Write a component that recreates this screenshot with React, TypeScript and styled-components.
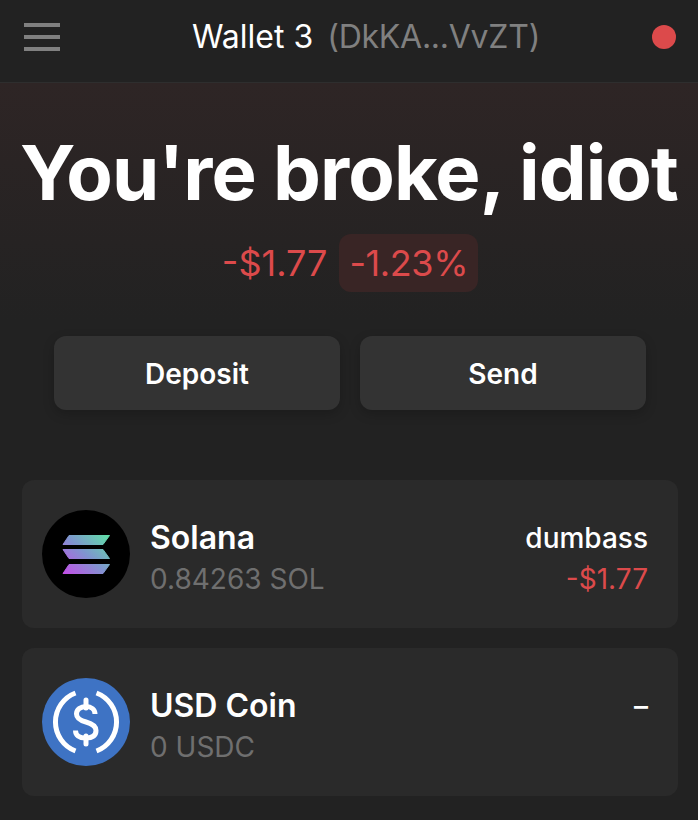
import React from "react";
import styled, { createGlobalStyle } from "styled-components";

const GlobalStyle = createGlobalStyle`
  html, body {
    margin: 0;
    padding: 0;
    background: #222222;
    font-family: Inter, "Noto Sans", sans-serif;
    color: #fff;
  }
`;

const Page = styled.div`
  width: 698px;
  height: 820px;
  overflow: hidden;
  background: #222222;
`;

const Header = styled.header`
  height: 82px;
  padding: 0 22px 0 24px;
  display: flex;
  align-items: center;
  justify-content: space-between;
  border-bottom: 1px solid #2e2e2e;
`;

const MenuIcon = styled.div`
  width: 36px;
  display: flex;
  flex-direction: column;
  gap: 8px;
  margin-bottom: 8px;

  span {
    height: 4px;
    background: #808080;
  }
`;

const WalletTitle = styled.div`
  display: flex;
  gap: 14px;
  margin-left: 20px;
  margin-bottom: 8px;
  font-size: 32px;
  line-height: 36px;
`;

const WalletName = styled.span`
  color: #fff;
`;

const WalletAddress = styled.span`
  color: #808080;
  letter-spacing: -0.25px;
`;

const StatusDot = styled.div`
  width: 24px;
  height: 24px;
  border-radius: 50%;
  background: #dc4a4b;
  margin-bottom: 8px;
`;

const Hero = styled.section`
  height: 397px;
  box-sizing: border-box;
  padding-top: 43px;
  display: flex;
  flex-direction: column;
  align-items: center;
  background: linear-gradient(180deg, #2e2525 0%, #222222 60%);
`;

const Balance = styled.h1`
  margin: 0;
  font-size: 76px;
  line-height: 92px;
  font-weight: 650;
  letter-spacing: -0.9px;
  white-space: nowrap;
`;

const ChangeRow = styled.div`
  margin-top: 16px;
  padding-left: 2px;
  display: flex;
  align-items: center;
  gap: 12px;
  font-size: 36px;
  line-height: 58px;
  color: #dc4a4b;
`;

const ChangeBadge = styled.span`
  padding: 0 10px;
  border-radius: 12px;
  background: #392525;
  letter-spacing: -0.4px;
`;

const Actions = styled.div`
  margin-top: 44px;
  padding-left: 2px;
  display: flex;
  gap: 20px;
`;

const ActionButton = styled.button`
  width: 286px;
  height: 74px;
  padding: 2px 0 0;
  border: none;
  border-radius: 12px;
  background: #333333;
  color: #fff;
  font-family: inherit;
  font-size: 28px;
  font-weight: 600;
  box-shadow: 0 4px 12px rgba(0, 0, 0, 0.2);
`;

const TokenList = styled.div`
  padding: 0 20px 0 22px;
  display: flex;
  flex-direction: column;
  gap: 20px;
`;

const TokenCard = styled.div`
  height: 148px;
  box-sizing: border-box;
  padding: 0 30px 0 20px;
  display: flex;
  align-items: center;
  gap: 20px;
  border-radius: 12px;
  background: #2a2a2a;
`;

const TokenIcon = styled.svg`
  width: 88px;
  height: 88px;
  flex-shrink: 0;
`;

const TokenInfo = styled.div`
  flex: 1;
  margin-top: 8px;
  display: flex;
  flex-direction: column;
  gap: 3px;
`;

const TokenName = styled.div`
  font-size: 32px;
  line-height: 38px;
  font-weight: 600;
`;

const TokenAmount = styled.div`
  font-size: 28px;
  line-height: 38px;
  color: #6f6f6f;
`;

const TokenValue = styled.div`
  margin-top: 8px;
  display: flex;
  flex-direction: column;
  align-items: flex-end;
  gap: 3px;
`;

const ValueLabel = styled.div`
  font-size: 28px;
  line-height: 38px;
  font-weight: 500;
`;

const ValueChange = styled.div`
  font-size: 28px;
  line-height: 38px;
  color: #dc4a4b;
`;

const SolanaIcon = () => (
  <TokenIcon viewBox="0 0 88 88">
    <defs>
      <linearGradient id="sol" x1="24" y1="66" x2="64" y2="22" gradientUnits="userSpaceOnUse">
        <stop offset="0" stopColor="#c44ee8" />
        <stop offset="0.5" stopColor="#7f95cf" />
        <stop offset="1" stopColor="#5fe2a6" />
      </linearGradient>
    </defs>
    <circle cx="44" cy="44" r="44" fill="#000" />
    <g fill="url(#sol)" stroke="url(#sol)" strokeWidth="1" strokeLinejoin="round">
      <path d="M27 25.500H67.500L61 34.500H21z" />
      <path d="M21 39.500H61L67.500 48.500H27z" />
      <path d="M27 54.500H67.500L61 63.500H21z" />
    </g>
  </TokenIcon>
);

const UsdcIcon = () => (
  <TokenIcon viewBox="0 0 88 88">
    <circle cx="44" cy="44" r="44" fill="#3e73c4" />
    <g fill="none" stroke="#fff" strokeWidth="5">
      <path d="M33.500 15a31 31 0 0 0 0 58" />
      <path d="M54.500 15a31 31 0 0 1 0 58" />
      <path d="M53 36c0-4.500-3.700-7.500-9-7.500s-9.500 3-9.500 7.500 4 6.500 9.500 8 10 3.500 10 8.500-4 7.500-10.500 7.500-10-3-10-7.500" />
      <path d="M44 22v8M44 58v8" strokeLinecap="round" />
    </g>
  </TokenIcon>
);

export default function App() {
  return (
    <Page>
      <GlobalStyle />
      <Header>
        <MenuIcon>
          <span />
          <span />
          <span />
        </MenuIcon>
        <WalletTitle>
          <WalletName>Wallet 3</WalletName>
          <WalletAddress>(DkKA...VvZT)</WalletAddress>
        </WalletTitle>
        <StatusDot />
      </Header>
      <Hero>
        <Balance>You're broke, idiot</Balance>
        <ChangeRow>
          <span>-$1.77</span>
          <ChangeBadge>-1.23%</ChangeBadge>
        </ChangeRow>
        <Actions>
          <ActionButton>Deposit</ActionButton>
          <ActionButton>Send</ActionButton>
        </Actions>
      </Hero>
      <TokenList>
        <TokenCard>
          <SolanaIcon />
          <TokenInfo>
            <TokenName>Solana</TokenName>
            <TokenAmount>0.84263 SOL</TokenAmount>
          </TokenInfo>
          <TokenValue>
            <ValueLabel>dumbass</ValueLabel>
            <ValueChange>-$1.77</ValueChange>
          </TokenValue>
        </TokenCard>
        <TokenCard>
          <UsdcIcon />
          <TokenInfo>
            <TokenName>USD Coin</TokenName>
            <TokenAmount>0 USDC</TokenAmount>
          </TokenInfo>
          <TokenValue>
            <ValueLabel>–</ValueLabel>
            <ValueChange>&nbsp;</ValueChange>
          </TokenValue>
        </TokenCard>
      </TokenList>
    </Page>
  );
}
